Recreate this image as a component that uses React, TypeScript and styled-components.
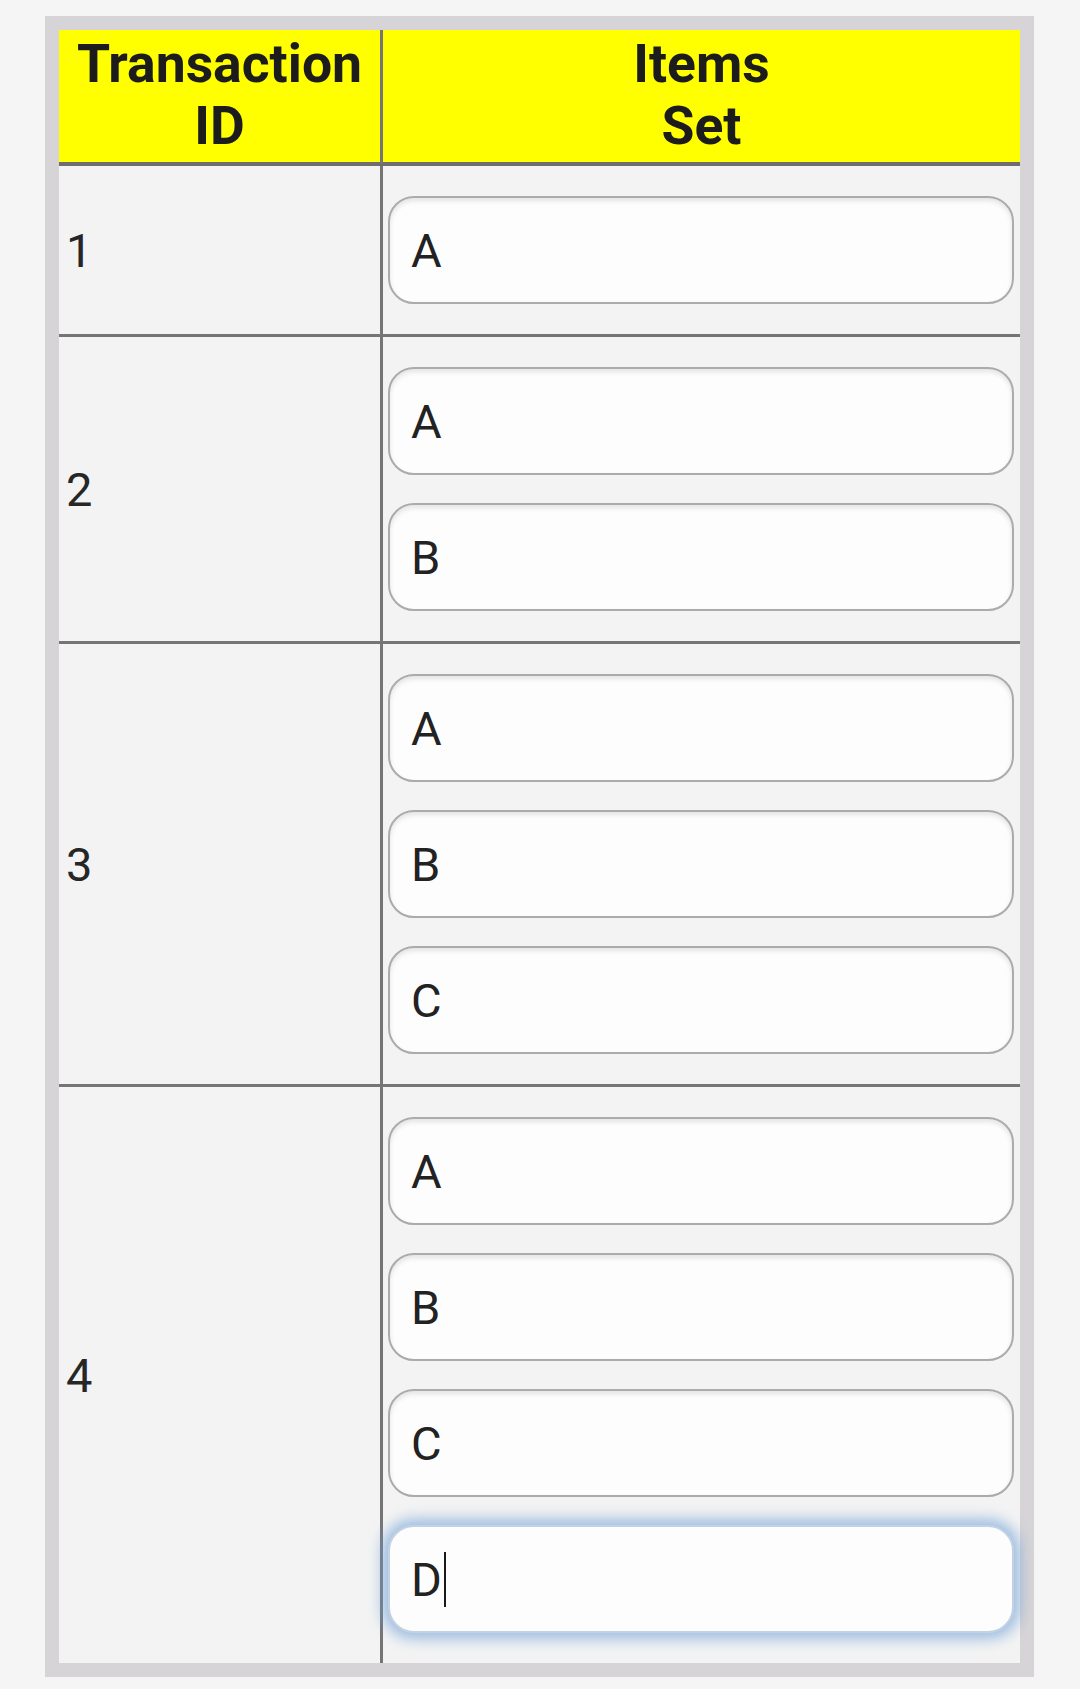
import styled, { createGlobalStyle } from "styled-components"

interface Transaction {
  id: number
  items: string[]
}

const transactions: Transaction[] = [
  { id: 1, items: ["A"] },
  { id: 2, items: ["A", "B"] },
  { id: 3, items: ["A", "B", "C"] },
  { id: 4, items: ["A", "B", "C", "D"] },
]

const GlobalStyle = createGlobalStyle`
  html, body {
    margin: 0;
    padding: 0;
    background: #f5f5f5;
  }
  body {
    font-family: Roboto, "Liberation Sans", Arial, sans-serif;
    color: #222;
  }
`

const Page = styled.div`
  padding: 16px 0 14px 45px;
`

const Table = styled.table`
  width: 989px;
  border: 14px solid #d6d4d6;
  border-collapse: separate;
  border-spacing: 0;
  background: #f3f3f3;
`

const HeadCell = styled.th`
  background: #ffff00;
  height: 134px;
  padding: 3px 0 5px 0;
  box-sizing: border-box;
  font-size: 53.5px;
  line-height: 62px;
  font-weight: 700;
  color: #1c1c1c;
  text-align: center;
  vertical-align: middle;
  border-bottom: 4px solid #6e6e6e;
  border-right: ${props => (props.$wide ? "none" : "3px solid #757575")};
`

const IdCell = styled.td`
  width: 324px;
  padding: 0 0 0 7px;
  box-sizing: border-box;
  font-size: 47px;
  color: #262626;
  vertical-align: middle;
  border-right: 3px solid #757575;
  border-bottom: ${props => (props.$last ? "none" : "3px solid #757575")};
`

const ItemsCell = styled.td`
  padding: 30px 6px 30px 5px;
  vertical-align: top;
  border-bottom: ${props => (props.$last ? "none" : "3px solid #757575")};
`

const ItemList = styled.div`
  display: flex;
  flex-direction: column;
  gap: 28px;
`

const ItemBox = styled.div`
  height: 108px;
  box-sizing: border-box;
  display: flex;
  align-items: center;
  padding: 0 18px 0 21px;
  background: #fefdfe;
  border: 2px solid ${props => (props.$focused ? "#c3d2e3" : "#ababab")};
  border-radius: 26px;
  font-size: 47px;
  color: #222;
  box-shadow: ${props =>
    props.$focused
      ? "0 0 14px 6px rgba(110, 160, 215, 0.65)"
      : "inset 0 3px 5px rgba(0, 0, 0, 0.1)"};
`

const Caret = styled.span`
  display: inline-block;
  width: 2px;
  height: 55px;
  margin-left: 2px;
  background: #1a1a1a;
`

export default function App() {
  return (
    <>
      <GlobalStyle />
      <Page>
        <Table>
          <thead>
            <tr>
              <HeadCell>
                Transaction
                <br />
                ID
              </HeadCell>
              <HeadCell $wide>
                Items
                <br />
                Set
              </HeadCell>
            </tr>
          </thead>
          <tbody>
            {transactions.map((t, i) => {
              const last = i === transactions.length - 1
              return (
                <tr key={t.id}>
                  <IdCell $last={last}>{t.id}</IdCell>
                  <ItemsCell $last={last}>
                    <ItemList>
                      {t.items.map((item, j) => {
                        const focused = last && j === t.items.length - 1
                        return (
                          <ItemBox key={item} $focused={focused}>
                            {item}
                            {focused && <Caret />}
                          </ItemBox>
                        )
                      })}
                    </ItemList>
                  </ItemsCell>
                </tr>
              )
            })}
          </tbody>
        </Table>
      </Page>
    </>
  )
}
